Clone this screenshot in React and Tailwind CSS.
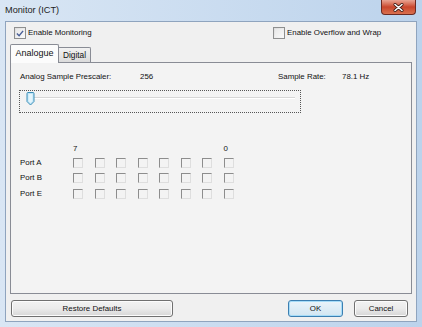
import React from "react";

const font = { fontFamily: '"Liberation Sans", Arial, sans-serif' };

function Check({ checked }) {
  return (
    <div className="w-[12px] h-[12px] border border-[#8e8f8f] bg-gradient-to-br from-[#dcdcdc] to-[#fbfbfb] p-[1px] flex items-center justify-center">
      <div className="w-full h-full bg-gradient-to-br from-[#e8e8e8] to-[#f8f8f8] flex items-center justify-center">
        {checked && (
          <svg width="9" height="9" viewBox="0 0 9 9">
            <path d="M1 4.5 L3.5 7 L8 1.5" fill="none" stroke="#4a5f97" strokeWidth="1.6" />
          </svg>
        )}
      </div>
    </div>
  );
}

function SmallBox() {
  return (
    <div className="w-[10px] h-[10px] border-t border-l border-[#8d8d8d] border-b-[#dedede] border-r-[#dedede] border-b border-r bg-[#f3f3f3]" />
  );
}

function Btn({ children, w, def }) {
  return (
    <div
      className={
        "h-[17px] rounded-[3px] border flex items-center justify-center text-[7.9px] text-[#111] " +
        (def
          ? "border-[#3c7fb1] bg-gradient-to-b from-[#eaf4fa] to-[#d2e6f2] shadow-[inset_0_0_0_1px_#a6dcf8]"
          : "border-[#707070] bg-gradient-to-b from-[#f2f2f2] via-[#ebebeb] to-[#d6d6d6] shadow-[inset_0_0_0_1px_#fcfcfc]")
      }
      style={{ width: w }}
    >
      {children}
    </div>
  );
}

export default function App() {
  const ports = ["Port A", "Port B", "Port E"];
  return (
    <div style={font} className="w-[422px] h-[327px] flex flex-col bg-gradient-to-r from-[#d9e6f4] to-[#bcd3ec] overflow-hidden">
      {/* title bar */}
      <div className="h-[21px] flex items-start justify-between shrink-0">
        <div className="pl-[5px] pt-[4px] text-[9.2px] text-[#1e1e1e]">Monitor (ICT)</div>
        <div className="mr-[6px] w-[35px] h-[15px] rounded-b-[4px] border border-t-0 border-[#6b2a22] bg-gradient-to-b from-[#e8a493] via-[#c9462c] to-[#d9704f] flex items-center justify-center">
          <svg width="11" height="9" viewBox="0 0 11 9">
            <path d="M2 1.5 L9 7.5 M9 1.5 L2 7.5" stroke="#3a1a14" strokeWidth="3" strokeLinecap="round" />
            <path d="M2 1.5 L9 7.5 M9 1.5 L2 7.5" stroke="#ffffff" strokeWidth="1.6" strokeLinecap="round" />
          </svg>
        </div>
      </div>
      {/* client */}
      <div className="mx-[5px] mb-[5px] flex-1 border border-[#8fa4be] bg-[#f0f0f0] flex flex-col text-[7.9px] text-[#111]">
        <div className="flex items-center justify-between pt-[5px] pl-[8px]">
          <div className="flex items-center gap-[2px]">
            <Check checked />
            <span>Enable Monitoring</span>
          </div>
          <div className="flex items-center gap-[2px] w-[143px]">
            <Check />
            <span>Enable Overflow and Wrap</span>
          </div>
        </div>
        {/* tabs */}
        <div className="mt-[4px] ml-[4px] flex items-end h-[19px]">
          <div className="h-[19px] w-[49px] border border-b-0 border-[#898c95] rounded-t-[2px] bg-[#fcfcfc] flex items-center justify-center text-[9px] relative z-10 -mb-[1px]">
            Analogue
          </div>
          <div className="h-[15px] w-[32px] border border-l-0 border-b-0 border-[#898c95] rounded-tr-[2px] bg-gradient-to-b from-[#f2f2f2] to-[#dbdbdb] flex items-center justify-center text-[8.3px]">
            Digital
          </div>
        </div>
        <div className="ml-[4px] mr-[4px] h-[232px] border border-[#898c95] bg-[#f3f3f3] relative">
          <div className="flex mt-[9px] h-[10px] items-center whitespace-nowrap">
            <span className="ml-[9px] w-[120px]">Analog Sample Prescaler:</span>
            <span className="w-[138px]">256</span>
            <span className="w-[64px]">Sample Rate:</span>
            <span>78.1 Hz</span>
          </div>
          {/* slider */}
          <div className="ml-[8px] mt-[8px] w-[282px] h-[23px] border border-dotted border-[#555] relative">
            <div className="absolute left-[9px] right-[5px] top-[6px] h-[2px] bg-[#d6d6d6] border-b border-white" />
            <svg className="absolute left-[6px] top-[1px]" width="9" height="14" viewBox="0 0 9 14">
              <path d="M1 1.5 Q1 0.5 2 0.5 L7 0.5 Q8 0.5 8 1.5 L8 9.5 L4.5 13 L1 9.5 Z" fill="#bfe4f6" stroke="#3c8fb8" strokeWidth="1" />
              <path d="M2.5 2 L6.5 2 L6.5 9 L4.5 11 L2.5 9 Z" fill="#e4f5fc" />
            </svg>
          </div>
          {/* ports grid */}
          <div className="mt-[30px] ml-[9px] grid grid-cols-[53px_repeat(8,21.5px)] items-center">
            <div className="h-[12px]" />
            <div className="h-[12px] leading-[12px]">7</div>
            <div /><div /><div /><div /><div /><div />
            <div className="h-[12px] leading-[12px]">0</div>
            {ports.map((p) => (
              <React.Fragment key={p}>
                <div className="h-[15.5px] flex items-center">{p}</div>
                {Array.from({ length: 8 }).map((_, i) => (
                  <div key={i} className="h-[15.5px] flex items-center">
                    <SmallBox />
                  </div>
                ))}
              </React.Fragment>
            ))}
          </div>
        </div>
        {/* buttons */}
        <div className="flex items-center mt-[6px] pl-[5px] pr-[8px]">
          <Btn w={162}>Restore Defaults</Btn>
          <div className="flex-1" />
          <Btn w={55} def>OK</Btn>
          <div className="w-[11px]" />
          <Btn w={54}>Cancel</Btn>
        </div>
      </div>
    </div>
  );
}
